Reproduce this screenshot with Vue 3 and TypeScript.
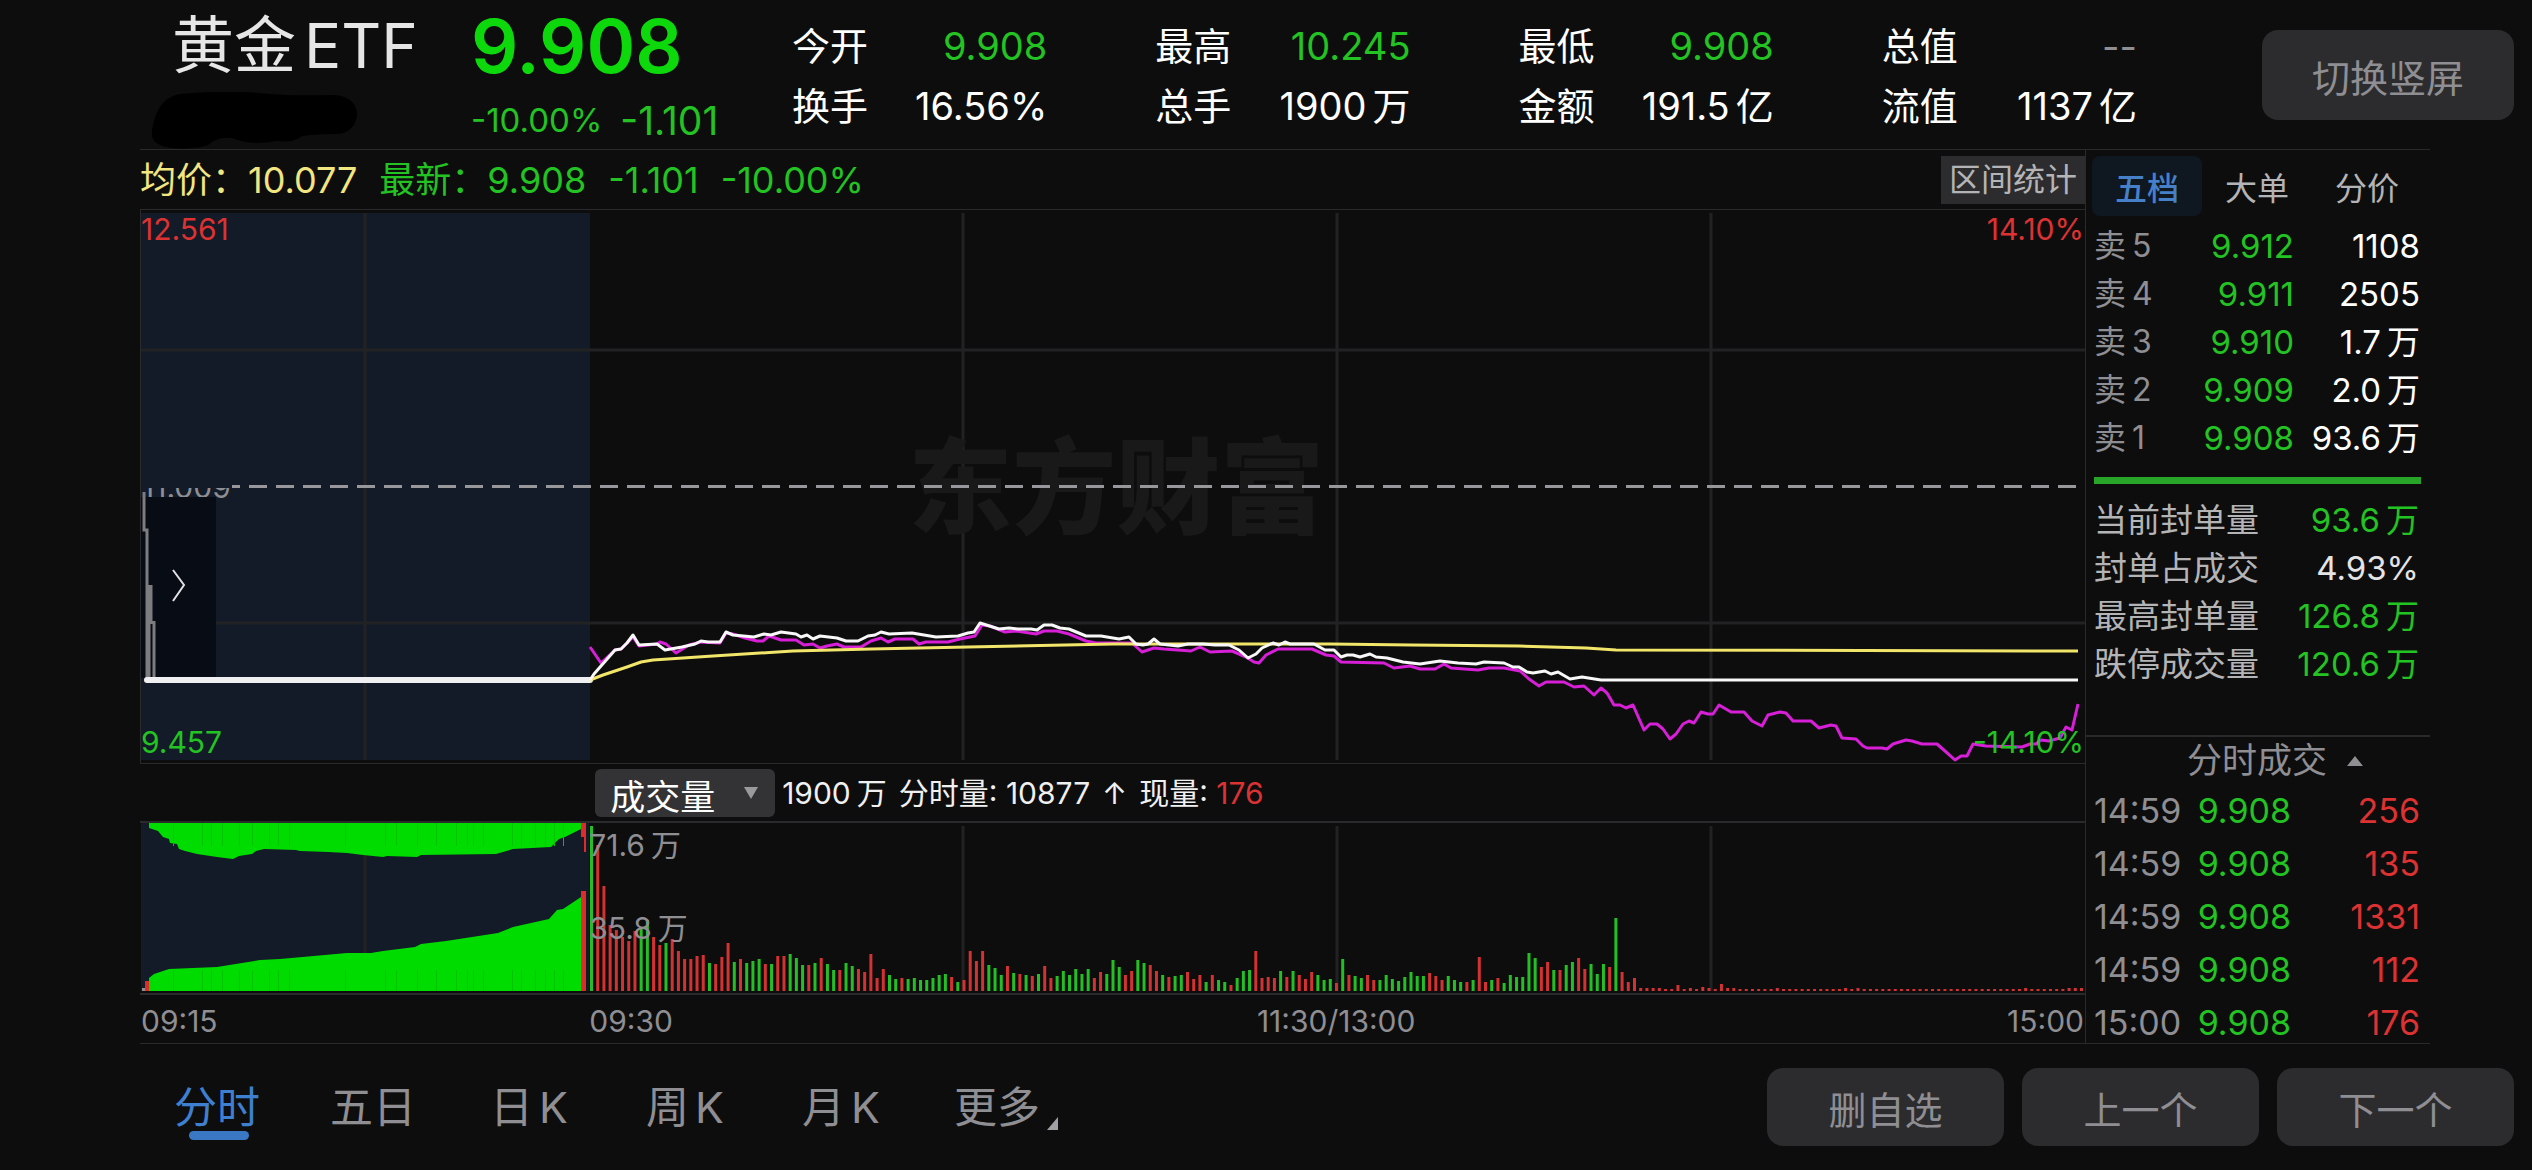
<script setup lang="ts">
import { ref } from 'vue'

type Tone = 'up' | 'down' | 'plain' | 'muted'

interface Stat { label: string; value: string; unit?: string; tone: Tone }
interface Order { side: string; level: number; price: string; qty: string; unit?: string }
interface Trade { time: string; price: string; qty: string }

const stats: Stat[] = [
  { label: '今开', value: '9.908', tone: 'down' },
  { label: '换手', value: '16.56%', tone: 'plain' },
  { label: '最高', value: '10.245', tone: 'down' },
  { label: '总手', value: '1900', unit: '万', tone: 'plain' },
  { label: '最低', value: '9.908', tone: 'down' },
  { label: '金额', value: '191.5', unit: '亿', tone: 'plain' },
  { label: '总值', value: '--', tone: 'muted' },
  { label: '流值', value: '1137', unit: '亿', tone: 'plain' },
]

const orders: Order[] = [
  { side: '卖', level: 5, price: '9.912', qty: '1108' },
  { side: '卖', level: 4, price: '9.911', qty: '2505' },
  { side: '卖', level: 3, price: '9.910', qty: '1.7', unit: '万' },
  { side: '卖', level: 2, price: '9.909', qty: '2.0', unit: '万' },
  { side: '卖', level: 1, price: '9.908', qty: '93.6', unit: '万' },
]

const sealStats: Stat[] = [
  { label: '当前封单量', value: '93.6', unit: '万', tone: 'down' },
  { label: '封单占成交', value: '4.93%', tone: 'plain' },
  { label: '最高封单量', value: '126.8', unit: '万', tone: 'down' },
  { label: '跌停成交量', value: '120.6', unit: '万', tone: 'down' },
]

const trades: Trade[] = [
  { time: '14:59', price: '9.908', qty: '256' },
  { time: '14:59', price: '9.908', qty: '135' },
  { time: '14:59', price: '9.908', qty: '1331' },
  { time: '14:59', price: '9.908', qty: '112' },
  { time: '15:00', price: '9.908', qty: '176' },
]

const sideTabs = ['五档', '大单', '分价']
const activeSide = ref('五档')

const periods: { name: string; suffix?: string; more?: boolean }[] = [
  { name: '分时' },
  { name: '五日' },
  { name: '日', suffix: 'K' },
  { name: '周', suffix: 'K' },
  { name: '月', suffix: 'K' },
  { name: '更多', more: true },
]
const activePeriod = ref('分时')
const indicator = ref('成交量')

const gridX = [365, 963, 1337, 1711]

const priceLine =
  '590,680 594,674 615,650 621,649 627,643 633,635 639,645 657,644 665,650 682,647 695,644 701,641 708,642 720,642 726,632 733,635 754,637 764,634 771,635 781,632 796,634 801,637 807,635 813,639 820,636 837,638 846,641 858,641 868,636 875,635 881,632 889,634 912,633 936,637 958,636 968,633 974,632 980,623 999,629 1009,628 1018,629 1031,629 1037,630 1044,625 1052,625 1060,628 1069,629 1086,636 1101,636 1119,639 1129,637 1136,644 1143,645 1148,644 1154,639 1160,644 1178,646 1188,644 1203,644 1215,645 1229,645 1239,650 1248,658 1256,654 1262,648 1273,643 1279,645 1285,642 1290,644 1314,644 1325,650 1334,650 1341,657 1347,655 1353,655 1360,657 1370,654 1376,657 1387,658 1403,662 1420,664 1440,661 1458,663 1476,664 1484,662 1504,663 1513,667 1519,667 1527,672 1533,673 1545,671 1551,674 1558,672 1570,679 1582,677 1601,680 1616,680 2078,680'

const netValueLine =
  '590,647 601,663 615,650 621,649 633,637 639,646 657,644 660,642 666,644 676,653 689,645 701,642 720,643 726,633 733,634 745,638 757,641 763,641 769,636 781,640 796,640 804,645 813,644 820,648 827,646 837,644 844,647 861,647 871,641 881,638 888,642 895,639 913,639 919,644 926,642 948,642 960,639 975,636 982,625 990,626 1005,632 1016,631 1036,634 1044,631 1057,631 1069,634 1086,641 1096,643 1108,643 1132,643 1142,652 1154,648 1164,649 1191,651 1200,647 1210,652 1232,651 1246,657 1254,662 1259,663 1266,655 1278,649 1312,649 1326,655 1334,656 1341,662 1384,663 1394,668 1410,666 1420,669 1435,669 1444,664 1451,668 1478,670 1489,668 1504,668 1520,671 1529,679 1539,686 1546,682 1564,682 1574,687 1584,686 1594,695 1601,688 1607,693 1614,705 1620,705 1626,708 1633,705 1644,730 1650,724 1657,724 1663,729 1670,739 1676,734 1683,724 1689,721 1694,723 1701,712 1708,714 1713,714 1719,705 1731,712 1744,712 1752,721 1762,726 1768,715 1780,712 1786,713 1793,721 1811,721 1819,728 1831,725 1836,726 1842,738 1856,739 1863,746 1867,748 1882,748 1887,749 1893,744 1906,740 1912,741 1922,744 1937,744 1945,751 1955,760 1961,756 1967,756 1973,744 1986,746 2022,747 2030,744 2036,744 2041,740 2049,741 2060,738 2066,727 2072,730 2078,704'

const averageLine =
  '590,680 603,675 627,667 641,662 653,660 713,656 793,651 871,649 968,647 1065,645 1113,644 1330,644 1412,645 1519,646 1586,648 1616,650 2078,651'

const auctionTop =
  '149,823 149,828 158,831 163,837 169,839 170,843 177,844 179,849 185,851 197,854 217,857 233,859 239,856 252,854 256,851 264,849 296,850 300,851 328,852 347,853 363,855 383,857 387,856 417,857 421,855 496,854 513,849 551,847 559,839 565,837 581,829 581,823'

const auctionBottom =
  '149,991 149,978 154,974 169,969 217,967 260,960 280,959 347,953 371,953 383,951 415,947 421,944 446,941 498,933 513,927 549,919 557,910 563,909 581,897 581,991'

const auctionSeams = [173, 202, 211, 222, 239, 252, 269, 278, 289, 345, 385, 396, 417, 436, 456, 467, 473, 483, 512, 521, 535, 545, 554, 563]

// One entry per minute: r = up minute, g = down minute, then the bar height.
const minutes = (
  'g165 r146 r105 r66 r61 r54 r50 r60 g64 g71 r54 r46 g48 r52 r40 r32 r32 r35 r36 g28 r27 r34 r48 ' +
  'g29 r32 g28 g30 g32 r27 g27 r35 r35 g37 g33 g26 r26 g28 r33 g27 g21 r21 g28 g25 r22 r19 r37 r13 r22 g16 g12 r13 g12 g13 g11 g11 g13 g16 g17 r14 g9 r11 ' +
  'r40 r30 r40 g26 g23 g16 r25 g18 r17 g16 r15 g17 r25 r13 g15 g20 g16 g22 g17 g22 r13 r19 g17 g31 g24 r16 r20 g31 g28 r26 r20 g16 r14 g15 g16 r19 r12 r16 g9 r16 g11 g9 r6 g13 g20 g21 ' +
  'r40 r13 r14 r13 g20 r14 g20 r16 r12 r19 g16 g11 g12 r8 g32 r16 g15 g13 r16 r11 g11 g16 g12 g10 g14 ' +
  'g19 g15 g15 r18 r15 r11 g15 g11 g9 r9 g11 r34 r9 g11 r13 g8 g16 g14 g14 g38 g33 r24 r29 g21 r21 g26 g29 r33 r22 g27 g17 g27 r24 g73 r19 r9 r13 ' +
  'r3 r3 r3 r3 r2 r2 r6 r2 r3 r2 r4 r3 r2 r7 r3 r3 r2 r2 r2 r2 r2 r2 r3 r2 r2 r2 r2 r2 r2 r2 r2 r2 r2 r3 r2 r3 r2 r2 r2 r2 r2 r2 r2 r2 r2 r2 r2 r2 r2 r2 r2 r2 r2 r2 r2 r2 r2 r2 r2 r2 r2 r2 r3 r2 r2 r2 r2 r2 r2 r3 r3 r3'
).split(' ')

const firstBar = 591
const lastBar = 2081
const bars = minutes.map((m, i) => ({
  x: firstBar + (i * (lastBar - firstBar)) / (minutes.length - 1) - 1,
  h: Number(m.slice(1)),
  up: m[0] === 'r',
}))
</script>

<template>
  <div class="page">
    <header class="head">
      <div class="name">
        <h1>黄金<span class="lat">ETF</span></h1>
        <svg class="mask" viewBox="0 0 206 57" aria-hidden="true">
          <path d="M0 39C3 20 10 5 28 2C60-1 90-1 118 2C140 4 165 3 184 3C200 5 206 15 205 24C203 36 195 42 184 42C170 42 158 43 150 44C142 50 135 50 124 49C108 52 95 52 80 46C68 45 62 48 56 53C42 58 16 58 6 52C0 48-1 44 0 39Z" />
        </svg>
      </div>
      <div class="quote">
        <strong class="last">9.908</strong>
        <p class="change"><span class="pct">-10.00%</span><span>-1.101</span></p>
      </div>
      <dl class="stats">
        <div v-for="s in stats" :key="s.label" class="stat">
          <dt>{{ s.label }}</dt>
          <dd :class="s.tone">{{ s.value }}<span v-if="s.unit" class="unit">{{ s.unit }}</span></dd>
        </div>
      </dl>
      <button type="button" class="btn rotate">切换竖屏</button>
    </header>

    <main class="body">
      <section class="charts">
        <div class="info">
          <p class="avg">均价：10.077</p>
          <p class="now">最新：9.908</p>
          <p class="now">-1.101</p>
          <p class="now">-10.00%</p>
          <button type="button" class="range">区间统计</button>
        </div>

        <div class="plot">
          <svg viewBox="140 210 1945 553" preserveAspectRatio="none" aria-hidden="true">
            <rect x="141" y="213" width="449" height="547" fill="#121b27" />
            <g stroke="#222224" stroke-width="3">
              <line x1="141" x2="2085" y1="350" y2="350" />
              <line x1="141" x2="2085" y1="623" y2="623" />
              <line v-for="x in gridX" :key="x" :x1="x" :x2="x" y1="213" y2="760" />
            </g>
            <line x1="140.5" x2="140.5" y1="210" y2="763" stroke="#2a2a2c" />
          </svg>
          <span class="watermark" aria-hidden="true">东方财富</span>
          <span class="tag mid">11.009</span>
          <svg viewBox="140 210 1945 553" preserveAspectRatio="none" role="img" aria-label="分时走势">
            <line x1="141" x2="2076" y1="486.5" y2="486.5" stroke="#97979c" stroke-width="3" stroke-dasharray="18 9" />
            <rect x="141" y="468" width="91" height="20" fill="#121b27" />
            <rect x="141" y="497" width="75" height="181" fill="#080c15" />
            <path d="M144 492V530H147V679M149 585V679M151 585V624M154 621V679" fill="none" stroke="#7d7d80" stroke-width="3" />
            <path d="M173 570L184 585L173 601" fill="none" stroke="#e2e2e4" stroke-width="2" />
            <line x1="147" x2="590" y1="680" y2="680" stroke="#f0f0f2" stroke-width="6" stroke-linecap="round" />
            <g fill="none" stroke-width="3" stroke-linejoin="round">
              <polyline :points="netValueLine" stroke="#d61fd6" />
              <polyline :points="averageLine" stroke="#f2e66a" />
              <polyline :points="priceLine" stroke="#f8f8f8" />
            </g>
          </svg>
          <span class="tag top left up">12.561</span>
          <span class="tag top right up">14.10%</span>
          <span class="tag bottom left down">9.457</span>
          <span class="tag bottom right down">-14.10%</span>
        </div>

        <div class="vol-head">
          <label class="picker">
            <select v-model="indicator" aria-label="指标">
              <option>成交量</option>
            </select>
            <svg viewBox="0 0 14 12" aria-hidden="true"><path d="M0 0H14L7 12Z" /></svg>
          </label>
          <p>
            <span>1900<span class="unit">万</span></span>
            <span>分时量: 10877</span>
            <span>↑</span>
            <span>现量: <span class="up">176</span></span>
          </p>
        </div>

        <div class="volume">
          <svg viewBox="140 823 1945 170" preserveAspectRatio="none" role="img" aria-label="成交量">
            <rect x="141" y="823" width="448" height="168" fill="#121b27" />
            <line v-for="x in gridX" :key="x" :x1="x" :x2="x" y1="826" y2="991" stroke="#222224" stroke-width="3" />
            <polygon :points="auctionTop" fill="#00dc00" />
            <polygon :points="auctionBottom" fill="#00dc00" />
            <g stroke="#00c400">
              <template v-for="x in auctionSeams" :key="x">
                <line :x1="x + 0.5" :x2="x + 0.5" y1="823" y2="846" />
                <line :x1="x + 0.5" :x2="x + 0.5" y1="970" y2="991" />
              </template>
            </g>
            <g fill="#e02b2b">
              <rect x="581" y="823" width="5" height="14" />
              <rect x="584" y="823" width="2" height="29" />
              <rect x="581" y="891" width="5" height="100" />
              <rect x="145" y="981" width="4" height="10" />
            </g>
            <rect x="142" y="988" width="3" height="3" fill="#8e8e93" />
            <rect
              v-for="(b, i) in bars"
              :key="i"
              :x="b.x"
              :y="991 - b.h"
              width="3"
              :height="b.h"
              :fill="b.up ? '#d23232' : '#24bf24'"
            />
          </svg>
          <span class="tag vol-max">71.6<span class="unit">万</span></span>
          <span class="tag vol-mid">35.8<span class="unit">万</span></span>
        </div>

        <div class="axis">
          <time class="t-open">09:15</time>
          <time class="t-start">09:30</time>
          <time class="t-noon">11:30/13:00</time>
          <time class="t-close">15:00</time>
        </div>
      </section>

      <aside class="side">
        <nav class="side-tabs">
          <button
            v-for="t in sideTabs"
            :key="t"
            type="button"
            :class="{ on: t === activeSide }"
            @click="activeSide = t"
          >{{ t }}</button>
        </nav>
        <table class="orders">
          <tbody>
            <tr v-for="o in orders" :key="o.level">
              <th scope="row">{{ o.side }}<span class="unit">{{ o.level }}</span></th>
              <td class="price">{{ o.price }}</td>
              <td>{{ o.qty }}<span v-if="o.unit" class="unit">{{ o.unit }}</span></td>
            </tr>
          </tbody>
        </table>
        <div class="ratio"></div>
        <dl class="seal">
          <div v-for="s in sealStats" :key="s.label">
            <dt>{{ s.label }}</dt>
            <dd :class="s.tone">{{ s.value }}<span v-if="s.unit" class="unit">{{ s.unit }}</span></dd>
          </div>
        </dl>
        <button type="button" class="deal-title">
          分时成交
          <svg viewBox="0 0 16 10" aria-hidden="true"><path d="M0 10L8 0L16 10Z" /></svg>
        </button>
        <table class="trades">
          <tbody>
            <tr v-for="(t, i) in trades" :key="i">
              <th scope="row">{{ t.time }}</th>
              <td class="price">{{ t.price }}</td>
              <td class="up">{{ t.qty }}</td>
            </tr>
          </tbody>
        </table>
      </aside>
    </main>

    <footer class="foot">
      <nav class="periods">
        <button
          v-for="p in periods"
          :key="p.name"
          type="button"
          :class="{ on: p.name === activePeriod }"
          @click="activePeriod = p.name"
        >
          {{ p.name }}<span v-if="p.suffix" class="unit">{{ p.suffix }}</span>
          <svg v-if="p.more" viewBox="0 0 11 13" aria-hidden="true"><path d="M11 0V13H0Z" /></svg>
        </button>
      </nav>
      <div class="actions">
        <button type="button" class="btn">删自选</button>
        <button type="button" class="btn">上一个</button>
        <button type="button" class="btn">下一个</button>
      </div>
    </footer>
  </div>
</template>

<style>
body {
  margin: 0;
  background: #0d0d0d;
}
</style>

<style scoped>
.page {
  min-height: 100vh;
  background: #0d0d0d;
  color: #fff;
  font-family: Inter, "Noto Sans CJK SC", sans-serif;
  font-size: 32px;
}

h1,
p,
dl,
dd {
  margin: 0;
}

button,
select {
  margin: 0;
  padding: 0;
  border: 0;
  background: none;
  color: inherit;
  font: inherit;
  cursor: pointer;
}

.unit {
  margin-left: 6px;
}

.up {
  color: #dc3232;
}

.down {
  color: #22c322;
}

.muted {
  color: #8e8e93;
}

.btn {
  flex: none;
  height: 78px;
  width: 237px;
  border-radius: 16px;
  background: #2c2c2e;
  color: #8e8e93;
  font-size: 38px;
}

/* header */
.head {
  display: flex;
  align-items: flex-start;
  height: 149px;
  padding: 0 18px 0 172px;
}

.name {
  width: 299px;
}

.name h1 {
  color: #e6e6e6;
  font-size: 62px;
  font-weight: 400;
  line-height: 92px;
  white-space: nowrap;
}

.lat {
  margin-left: 8px;
}

.mask {
  display: block;
  width: 206px;
  height: 57px;
  margin-left: -20px;
  fill: #000;
}

.quote {
  width: 321px;
}

.last {
  display: block;
  color: #0cd80c;
  font-size: 74px;
  font-weight: 600;
  line-height: 92px;
}

.change {
  display: flex;
  align-items: center;
  gap: 18px;
  color: #22c322;
  font-size: 39px;
  line-height: 57px;
}

.pct {
  font-size: 33px;
}

.stats {
  flex: 1;
  display: grid;
  grid-template-rows: 60px 60px;
  grid-auto-flow: column;
  grid-auto-columns: 1fr;
  column-gap: 108px;
  margin-right: 125px;
  padding-top: 16px;
  font-size: 38px;
  line-height: 60px;
}

.stat {
  display: flex;
  justify-content: space-between;
  white-space: nowrap;
}

.rotate {
  width: 252px;
  height: 90px;
  margin-top: 30px;
}

/* charts */
.body {
  display: grid;
  grid-template-columns: minmax(0, 1fr) 345px;
  margin: 0 102px 0 140px;
  border-top: 1px solid #2a2a2c;
  border-bottom: 1px solid #2a2a2c;
}

.info {
  display: flex;
  align-items: center;
  gap: 22px;
  height: 59px;
  border-bottom: 1px solid #2a2a2c;
  font-size: 36px;
  line-height: 58px;
  white-space: nowrap;
}

.avg {
  color: #f2e680;
}

.now {
  color: #22c322;
}

.range {
  width: 144px;
  height: 48px;
  margin-left: auto;
  background: #2c2c2e;
  color: #b4b4b6;
  font-size: 32px;
  line-height: 48px;
}

.plot,
.volume {
  position: relative;
}

.plot {
  height: 553px;
  border-bottom: 1px solid #2a2a2c;
}

.plot svg {
  position: absolute;
  inset: 0;
  width: 100%;
  height: 100%;
}

.watermark {
  position: absolute;
  top: 218px;
  left: 39.5%;
  color: #191919;
  font-size: 104px;
  font-weight: 900;
  line-height: 120px;
}

.tag {
  position: absolute;
  font-size: 30px;
  line-height: 36px;
  white-space: nowrap;
}

.left {
  left: 1px;
}

.right {
  right: 1px;
}

.top {
  top: 1px;
}

.bottom {
  bottom: 3px;
}

.mid {
  top: 259px;
  left: 2px;
  color: #8e8e93;
}

.vol-head {
  display: flex;
  align-items: center;
  gap: 7px;
  height: 57px;
  padding-left: 23.4%;
  border-bottom: 2px solid #2a2a2c;
  color: #f0f0f0;
  font-size: 30px;
  line-height: 56px;
  white-space: nowrap;
}

.vol-head p {
  display: flex;
  gap: 12px;
}

.picker {
  position: relative;
}

.picker select {
  display: block;
  width: 180px;
  height: 48px;
  padding-left: 15px;
  border-radius: 6px;
  appearance: none;
  background: #333335;
  color: #fff;
  font-size: 35px;
}

.picker svg {
  position: absolute;
  top: 18px;
  right: 17px;
  width: 14px;
  height: 12px;
  fill: #9a9a9e;
  pointer-events: none;
}

.volume {
  height: 170px;
  border-bottom: 2px solid #2a2a2c;
}

.volume svg {
  display: block;
  width: 100%;
  height: 100%;
}

.vol-max,
.vol-mid {
  left: 23.1%;
  color: #8e8e93;
}

.vol-max {
  top: 4px;
}

.vol-mid {
  top: 87px;
}

.axis {
  position: relative;
  height: 48px;
  color: #8e8e93;
  font-size: 30px;
  line-height: 52px;
}

.axis time {
  position: absolute;
}

.t-open {
  left: 1px;
}

.t-start {
  left: 23.1%;
}

.t-noon {
  left: 61.5%;
  transform: translateX(-50%);
}

.t-close {
  right: 1px;
}

/* order book */
.side {
  border-left: 1px solid #2a2a2c;
  font-size: 33px;
}

.side-tabs {
  display: flex;
  padding: 6px;
}

.side-tabs button {
  width: 110px;
  height: 60px;
  border-radius: 8px;
  color: #b4b4b6;
  font-size: 32px;
}

.side-tabs .on {
  background: #0f1720;
  color: #4580c8;
  font-weight: 500;
}

table {
  width: 326px;
  margin-left: 8px;
  border-collapse: collapse;
  table-layout: fixed;
  font-size: inherit;
  white-space: nowrap;
}

th,
td {
  padding: 0;
  font-weight: 400;
  text-align: right;
}

th {
  width: 80px;
  color: #8e8e93;
  text-align: left;
}

td.price {
  width: 120px;
  color: #22c322;
}

.orders tr {
  height: 48px;
}

.orders td,
.orders th {
  line-height: 48px;
}

.orders th {
  font-size: 32px;
}

.ratio {
  height: 7px;
  margin: 15px 9px 12px 8px;
  background: #28a428;
}

.seal {
  margin: 0 11px 47px 8px;
}

.seal div {
  display: flex;
  justify-content: space-between;
  line-height: 48px;
  white-space: nowrap;
}

.seal dt {
  color: #b4b4b6;
}

.seal .plain {
  color: #e4e4e6;
}

.deal-title {
  display: flex;
  align-items: center;
  justify-content: center;
  gap: 20px;
  width: 100%;
  height: 49px;
  padding-left: 34px;
  border-top: 2px solid #2a2a2c;
  color: #8e8e93;
  font-size: 35px;
  line-height: 47px;
}

.deal-title svg {
  width: 16px;
  height: 10px;
  fill: #8e8e93;
}

.trades {
  margin-bottom: -8px;
  font-size: 34px;
}

.trades td,
.trades th {
  line-height: 53px;
}

.trades th {
  width: 96px;
}

.trades td.price {
  width: 101px;
}

/* footer */
.foot {
  display: flex;
  align-items: center;
  justify-content: space-between;
  padding: 24px 18px 24px 139px;
}

.periods {
  display: flex;
  color: #8e8e93;
  font-size: 43px;
}

.periods button {
  position: relative;
  width: 156px;
  line-height: 62px;
  white-space: nowrap;
}

.periods .on {
  color: #3f7fd0;
}

.periods .on::after {
  content: "";
  position: absolute;
  bottom: -2px;
  left: 50px;
  width: 60px;
  height: 9px;
  border-radius: 5px;
  background: #3a78c4;
}

.periods svg {
  position: absolute;
  right: 17px;
  bottom: 8px;
  width: 11px;
  height: 13px;
  fill: #a0a0a4;
}

.actions {
  display: flex;
  gap: 18px;
}
</style>
